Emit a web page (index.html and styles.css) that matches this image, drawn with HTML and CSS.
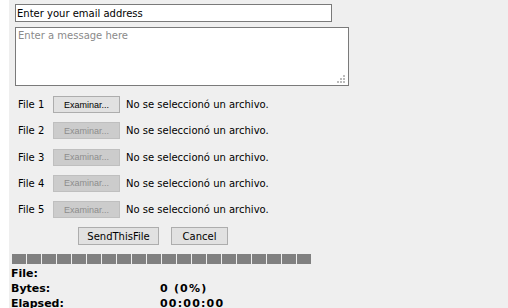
FILE: index.html
```html
<html>
<head>
<meta http-equiv="Content-Type" content="text/html; charset=UTF-8">
<link rel="stylesheet" href="styles.css">
</head>
<body>
<div class="panel">
  <form class="upload">
    <input class="email" type="text" value="Enter your email address">
    <div class="message-box">
      <textarea class="message" placeholder="Enter a message here"></textarea>
      <svg class="grip" width="8" height="8" viewBox="0 0 8 8">
        <rect x="6" y="0" width="2" height="2"/>
        <rect x="3" y="3" width="2" height="2"/>
        <rect x="6" y="3" width="2" height="2"/>
        <rect x="0" y="6" width="2" height="2"/>
        <rect x="3" y="6" width="2" height="2"/>
        <rect x="6" y="6" width="2" height="2"/>
      </svg>
    </div>
    <div class="files">
      <div class="file-row">
        <span class="file-label">File 1</span>
        <button type="button" class="browse">Examinar...</button>
        <span class="file-name">No se seleccionó un archivo.</span>
      </div>
      <div class="file-row">
        <span class="file-label">File 2</span>
        <button type="button" class="browse" disabled>Examinar...</button>
        <span class="file-name">No se seleccionó un archivo.</span>
      </div>
      <div class="file-row">
        <span class="file-label">File 3</span>
        <button type="button" class="browse" disabled>Examinar...</button>
        <span class="file-name">No se seleccionó un archivo.</span>
      </div>
      <div class="file-row">
        <span class="file-label">File 4</span>
        <button type="button" class="browse" disabled>Examinar...</button>
        <span class="file-name">No se seleccionó un archivo.</span>
      </div>
      <div class="file-row">
        <span class="file-label">File 5</span>
        <button type="button" class="browse" disabled>Examinar...</button>
        <span class="file-name">No se seleccionó un archivo.</span>
      </div>
    </div>
    <div class="actions">
      <button type="button" class="action send">SendThisFile</button>
      <button type="button" class="action cancel">Cancel</button>
    </div>
  </form>
  <div class="progress">
    <span></span><span></span><span></span><span></span><span></span>
    <span></span><span></span><span></span><span></span><span></span>
    <span></span><span></span><span></span><span></span><span></span>
    <span></span><span></span><span></span><span></span><span></span>
  </div>
  <div class="stats">
    <span class="stat-label">File:</span><span class="stat-value"></span>
    <span class="stat-label">Bytes:</span><span class="stat-value">0 (0%)</span>
    <span class="stat-label">Elapsed:</span><span class="stat-value">00:00:00</span>
  </div>
</div>
</body>
</html>
```

FILE: styles.css
```css
body
{
  margin: 0 0 0 9px;
  background: white;
  font-family: "DejaVu Sans", Verdana, sans-serif;
  font-size: 10px;
  color: #000;
}
.panel
{
  background: #efefef;
  min-height: 308px;
  padding-top: 4px;
  box-sizing: border-box;
}
.upload { margin: 0; }

.email
{
  display: block;
  box-sizing: border-box;
  width: 317px;
  height: 18px;
  margin: 0 0 0 6px;
  padding: 0 1px;
  border: 1px solid #7a7a7a;
  background: white;
  font-family: "DejaVu Sans", Verdana, sans-serif;
  font-size: 10px;
  color: #000;
  outline: none;
}
.message-box
{
  position: relative;
  width: 334px;
  height: 59px;
  margin: 5px 0 0 6px;
}
.message
{
  display: block;
  box-sizing: border-box;
  width: 334px;
  height: 59px;
  margin: 0;
  padding: 2px 2px;
  border: 1px solid #7a7a7a;
  background: white;
  resize: none;
  font-family: "DejaVu Sans", Verdana, sans-serif;
  font-size: 10px;
  outline: none;
}
.message::placeholder { color: #8a8a8a; opacity: 1; }
.grip
{
  position: absolute;
  right: 4px;
  bottom: 3px;
  fill: #bcbcbc;
}

.files
{
  display: grid;
  row-gap: 9.25px;
  margin-top: 10px;
}
.file-row
{
  display: flex;
  align-items: center;
  height: 17px;
  margin-left: 9px;
}
.file-label { width: 28px; margin-right: 7px; white-space: nowrap; }
.file-name { margin-left: 6px; white-space: nowrap; }

.browse, .action
{
  -webkit-appearance: none;
  appearance: none;
  box-sizing: border-box;
  margin: 0;
  padding: 0;
  border: 1px solid #adadad;
  background: #e1e1e1;
  color: #000;
}
.browse
{
  width: 67px;
  height: 17px;
  font-family: "Liberation Sans", Arial, sans-serif;
  font-size: 9px;
}
.browse:disabled
{
  background: #cccccc;
  border-color: #bfbfbf;
  color: #8d8d8d;
}
.actions
{
  display: flex;
  gap: 12px;
  margin: 9px 0 0 69px;
}
.action
{
  height: 18px;
  font-family: "DejaVu Sans", Verdana, sans-serif;
  font-size: 10px;
}
.send { width: 81px; }
.cancel { width: 57px; }

.progress
{
  display: flex;
  gap: 1px;
  height: 10px;
  margin: 9px 0 0 3px;
}
.progress span
{
  width: 14px;
  height: 10px;
  background: #808080;
}

.stats
{
  display: grid;
  grid-template-columns: 149px auto;
  margin: 2px 0 0 2px;
  font-size: 11px;
  font-weight: bold;
  line-height: 15px;
}
.stat-value { letter-spacing: 1.2px; }
```
